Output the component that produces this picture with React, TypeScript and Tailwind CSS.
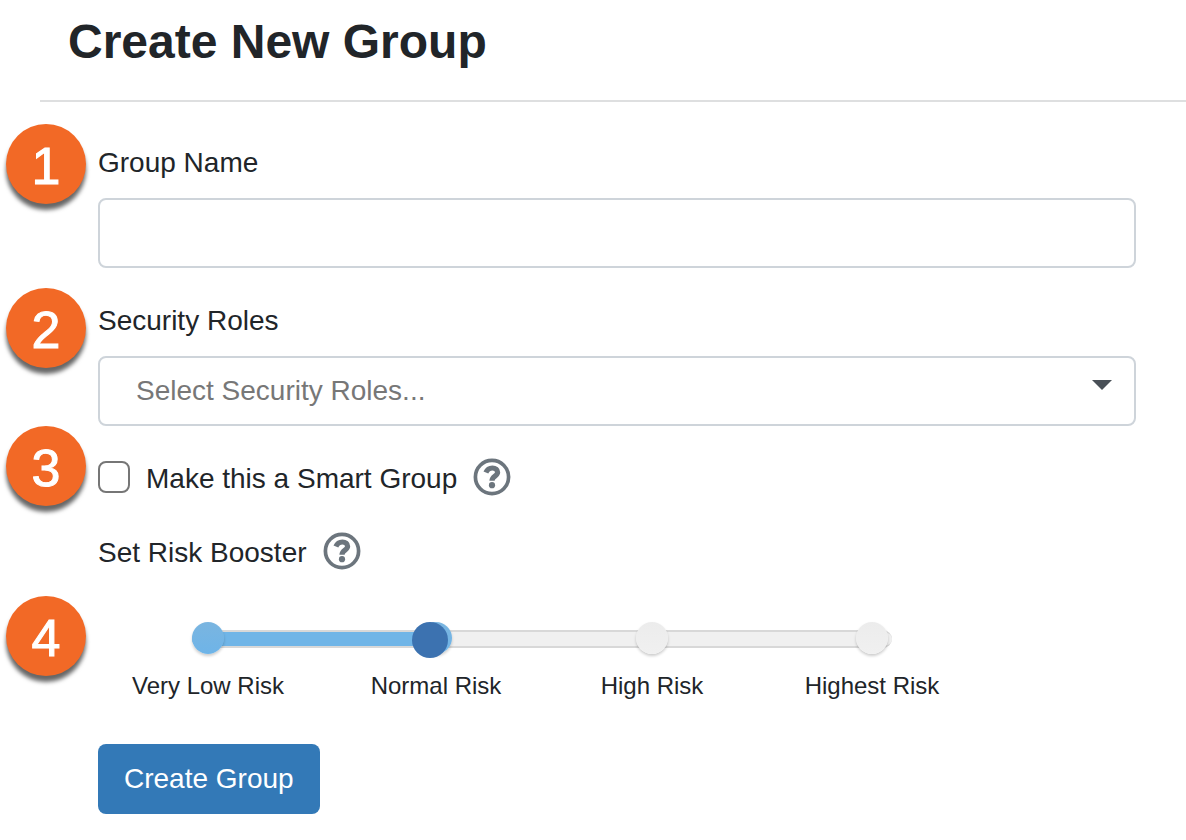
import { useState } from "react";
import type { ReactNode } from "react";
import clsx from "clsx";

const riskLevels = ["Very Low Risk", "Normal Risk", "High Risk", "Highest Risk"];

function Step({ number, children }: { number: number; children: ReactNode }) {
  return (
    <div className="flex items-start gap-3">
      <div className="ml-[6px] flex h-20 w-20 shrink-0 items-center justify-center rounded-full bg-[#f26926] pt-1 text-[52px] leading-none text-white shadow-[0_6px_4px_rgba(0,0,0,0.6)] [-webkit-text-stroke:1px_white]">
        {number}
      </div>
      <div className="min-w-0 flex-1">{children}</div>
    </div>
  );
}

function HelpButton({ label }: { label: string }) {
  return (
    <button type="button" aria-label={label} className="text-[#6c757d]">
      <svg viewBox="0 0 38 38" className="h-[38px] w-[38px]" fill="none" stroke="currentColor">
        <circle cx="19" cy="19" r="16.6" strokeWidth="3.7" />
        <path
          d="M12.9 14.6C14.3 11.2 16.5 10 19.4 10C22.6 10 24.6 11.9 24.6 14.3C24.6 18.3 19 18 19 22.8"
          strokeWidth="5.2"
        />
        <circle cx="19" cy="27.2" r="3.1" fill="currentColor" stroke="none" />
      </svg>
    </button>
  );
}

function RiskSlider() {
  const [level, setLevel] = useState(1);

  return (
    <div className="relative max-w-[896px] pt-[26px]">
      {/* track */}
      <div className="absolute top-[34px] right-[102px] left-[94px] flex h-[18px] rounded-full border-y-2 border-[#d8d8d8] bg-[#f0f0f0]">
        <div
          className="rounded-l-full bg-[#70b5e7]"
          style={{ width: `${(level / 3) * 100}%` }}
        />
      </div>
      <div className="relative grid grid-cols-[220fr_236fr_196fr_244fr]">
        {riskLevels.map((name, i) => (
          <div key={name} className="flex flex-col items-center gap-4">
            <div
              className={clsx(
                "h-8 w-8 rounded-full bg-linear-to-b shadow-[0_2px_3px_rgba(0,0,0,0.2)]",
                i <= level ? "from-[#7ab5e0] to-[#6eb4e8]" : "from-[#ececec] to-[#f0f0f0]"
              )}
            />
            <div className="text-[24px] leading-[32px]">{name}</div>
          </div>
        ))}
      </div>
      <input
        type="range"
        min={0}
        max={3}
        value={level}
        onChange={(e) => setLevel(Number(e.target.value))}
        aria-label="Risk booster"
        className="absolute top-[26px] left-[92px] h-9 w-[702px] appearance-none bg-transparent [&::-webkit-slider-thumb]:h-9 [&::-webkit-slider-thumb]:w-9 [&::-webkit-slider-thumb]:appearance-none [&::-webkit-slider-thumb]:rounded-full [&::-webkit-slider-thumb]:bg-[#3c72b0]"
      />
    </div>
  );
}

export default function App() {
  return (
    <div className="min-h-screen bg-white pb-6 font-['Liberation_Sans',Arial,sans-serif] text-[28px] leading-[42px] text-[#212529]">
      <header className="ml-10 border-b-2 border-[#dedfe0] pt-[13px] pb-[29px] pl-7">
        <h1 className="text-[48px] leading-[58px] font-bold">Create New Group</h1>
      </header>

      <form className="pt-[22px] pr-[50px]" onSubmit={(e) => e.preventDefault()}>
        <Step number={1}>
          <div className="flex flex-col gap-[14px] pt-[18px]">
            <label htmlFor="group-name">Group Name</label>
            <input
              id="group-name"
              type="text"
              className="h-[70px] w-full rounded-lg border-2 border-[#ced4da] bg-white px-6"
            />
          </div>
        </Step>

        <div className="pt-5">
          <Step number={2}>
            <div className="flex flex-col gap-[14px] pt-3">
              <label htmlFor="security-roles">Security Roles</label>
              <div className="relative">
                <select
                  id="security-roles"
                  defaultValue=""
                  className="block h-[70px] w-full appearance-none rounded-lg border-2 border-[#ced4da] bg-white pr-16 pl-9 text-[#777777]"
                >
                  <option value="">Select Security Roles...</option>
                </select>
                <svg
                  viewBox="0 0 20 10"
                  className="pointer-events-none absolute top-6 right-6 h-[10px] w-5 fill-[#495057]"
                >
                  <path d="M0 0h20L10 10z" />
                </svg>
              </div>
            </div>
          </Step>
        </div>

        <Step number={3}>
          <div className="flex items-center gap-4 pt-7">
            <input
              id="smart-group"
              type="checkbox"
              className="h-8 w-8 appearance-none rounded-lg border-2 border-[#767676] bg-white checked:bg-[#3379b7]"
            />
            <label htmlFor="smart-group" className="pt-1">
              Make this a Smart Group
            </label>
            <HelpButton label="About smart groups" />
          </div>
        </Step>

        <div className="flex items-center gap-4 pt-[22px] pb-[22px] pl-[98px]">
          <span className="pt-1">Set Risk Booster</span>
          <HelpButton label="About the risk booster" />
        </div>

        <Step number={4}>
          <RiskSlider />
        </Step>

        <div className="pt-[42px] pl-[98px]">
          <button
            type="submit"
            className="h-[70px] rounded-lg bg-[#3379b7] px-[26px] text-white"
          >
            Create Group
          </button>
        </div>
      </form>
    </div>
  );
}
